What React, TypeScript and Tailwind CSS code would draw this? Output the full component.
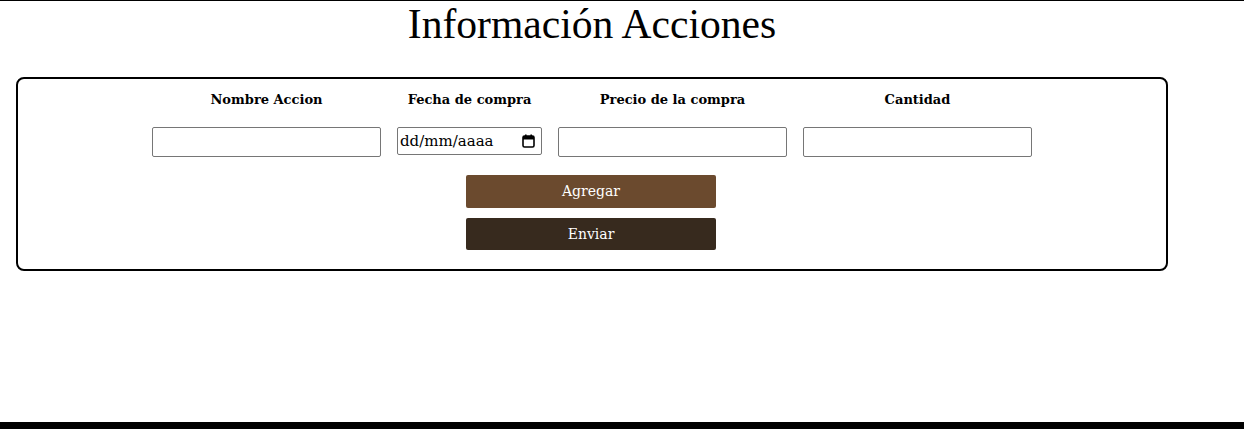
const labels = ["Nombre Accion", "Fecha de compra", "Precio de la compra", "Cantidad"];

function CalendarIcon() {
  return (
    <svg width="13" height="14" viewBox="0 0 13 14" className="shrink-0">
      <rect x="1" y="2" width="11" height="11" rx="1.5" fill="none" stroke="#000" strokeWidth="1.6" />
      <rect x="1" y="2" width="11" height="3.5" fill="#000" />
      <rect x="3" y="0.5" width="1.6" height="2.5" fill="#000" />
      <rect x="8.4" y="0.5" width="1.6" height="2.5" fill="#000" />
    </svg>
  );
}

export default function App() {
  return (
    <div className="min-h-[429px] bg-white border-t border-black font-['DejaVu_Serif',serif] text-black">
      <div className="w-[1152px] ml-4">
        <h1 className="text-center text-[41.6px] leading-[47px] font-normal font-['Liberation_Serif',serif]">
          Información Acciones
        </h1>

        <div className="mt-[29px] border-2 border-black rounded-lg pt-[12px] pb-[19px] flex flex-col items-center">
          <div className="flex gap-4">
            {labels.map((label, i) => (
              <div
                key={label}
                className={`flex flex-col items-center gap-[18px] ${i === 1 ? "w-[145px]" : "w-[229px]"}`}
              >
                <span className="text-[13px] leading-[18px] font-bold whitespace-nowrap">{label}</span>
                {i === 1 ? (
                  <div className="w-[145px] h-[28px] border border-[#767676] rounded-[2px] flex items-center justify-between pl-[2px] pr-[6px]">
                    <span className="text-[15px] leading-none">dd/mm/aaaa</span>
                    <CalendarIcon />
                  </div>
                ) : (
                  <input
                    type="text"
                    className="w-[229px] h-[30px] border border-[#767676] rounded-[2px] px-1 outline-none"
                  />
                )}
              </div>
            ))}
          </div>

          <button className="mt-[18px] mr-[2px] w-[250px] h-[33px] bg-[#6b4a2e] text-white text-[14px] rounded-[2px]">
            Agregar
          </button>
          <button className="mt-[10px] mr-[2px] w-[250px] h-[32px] bg-[#372a1e] text-white text-[14px] rounded-[2px]">
            Enviar
          </button>
        </div>
      </div>

      <div className="mt-[151px] h-[10px] bg-black" />
    </div>
  );
}
